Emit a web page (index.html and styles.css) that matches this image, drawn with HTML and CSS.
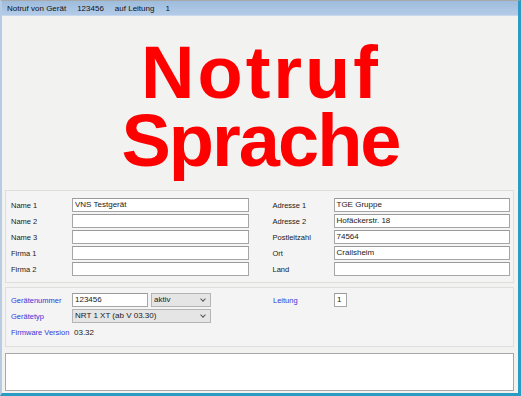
FILE: index.html
```html
<!DOCTYPE html>
<html lang="de">
<head>
    <meta charset="UTF-8">
    <title>Notruf</title>
    <link rel="stylesheet" href="styles.css">
</head>
<body>
    <div class="window">
        <div class="titlebar">
            <span>Notruf von Gerät</span>
            <span>123456</span>
            <span>auf Leitung</span>
            <span>1</span>
        </div>

        <div class="content">
            <div class="hero">
                <div class="hero-line wide">Notruf</div>
                <div class="hero-line narrow">Sprache</div>
            </div>

            <div class="group address">
                <div class="form-col">
                    <label>Name 1</label><div class="field">VNS Testgerät</div>
                    <label>Name 2</label><div class="field"></div>
                    <label>Name 3</label><div class="field"></div>
                    <label>Firma 1</label><div class="field"></div>
                    <label>Firma 2</label><div class="field"></div>
                </div>
                <div class="form-col">
                    <label>Adresse 1</label><div class="field">TGE Gruppe</div>
                    <label>Adresse 2</label><div class="field">Hofäckerstr. 18</div>
                    <label>Postleitzahl</label><div class="field">74564</div>
                    <label>Ort</label><div class="field">Crailsheim</div>
                    <label>Land</label><div class="field"></div>
                </div>
            </div>

            <div class="group device">
                <div class="device-col">
                    <label class="blue">Gerätenummer</label>
                    <div class="inline">
                        <div class="field num">123456</div>
                        <div class="select short">aktiv<span class="caret"></span></div>
                    </div>
                    <label class="blue">Gerätetyp</label>
                    <div class="select long">NRT 1 XT (ab V 03.30)<span class="caret"></span></div>
                    <label class="blue">Firmware Version</label>
                    <div class="value">03.32</div>
                </div>
                <div class="device-col right">
                    <label class="blue">Leitung</label>
                    <div class="field tiny">1</div>
                </div>
            </div>

            <div class="memo"></div>
        </div>
    </div>
</body>
</html>
```

FILE: styles.css
```css
* {
    margin: 0;
    padding: 0;
    box-sizing: border-box;
}

body {
    font-family: "Liberation Sans", Arial, sans-serif;
    font-size: 8px;
    color: #1a1a1a;
    background: #fff;
    width: 521px;
    height: 396px;
    overflow: hidden;
}

.window {
    width: 521px;
    height: 396px;
    display: flex;
    flex-direction: column;
    border-top: 1px solid #a8a8a8;
    border-left: 2px solid #b7cbe2;
    border-right: 3px solid #2a9cc4;
    border-bottom: 3px solid #2a9cc4;
    background: #f2f2f1;
}

.titlebar {
    height: 15px;
    display: flex;
    align-items: center;
    gap: 11px;
    padding-left: 5px;
    background: linear-gradient(to bottom, #9ebcdc, #b3cbe8);
    border-bottom: 1px solid #c9d9ec;
    color: #111;
}

.content {
    flex: 1;
    display: flex;
    flex-direction: column;
    padding: 0 4px 2px 3px;
}

.hero {
    height: 174px;
    display: flex;
    flex-direction: column;
    justify-content: center;
    align-items: center;
    color: #ff0000;
    font-weight: bold;
    font-size: 74px;
    line-height: 68px;
    padding-top: 8px;
}

.hero-line.wide {
    letter-spacing: 3px;
    margin-right: -3px;
}

.hero-line.narrow {
    letter-spacing: -2px;
    margin-right: -2px;
}

.group {
    border: 1px solid #dedede;
    background: #f4f4f4;
    display: flex;
}

.group label {
    font-size: 7.5px;
    white-space: nowrap;
}

.address {
    height: 93px;
    padding: 7px 3px 0 5px;
    gap: 24px;
}

.form-col {
    flex: 1;
    display: grid;
    grid-template-columns: 61px 1fr;
    grid-auto-rows: 14px;
    row-gap: 2px;
    align-items: center;
}

.field {
    height: 14px;
    border: 1px solid #a6a6a6;
    border-top-color: #9a9a9a;
    background: #fff;
    padding: 0 2px;
    line-height: 12px;
    white-space: nowrap;
}

.device {
    margin-top: 4px;
    height: 60px;
    padding: 5px 4px 0 5px;
    gap: 62px;
}

.device-col {
    display: grid;
    grid-template-columns: 61px auto;
    grid-auto-rows: 14px;
    row-gap: 2px;
    align-items: center;
    width: 200px;
    white-space: nowrap;
}

.device-col.right {
    grid-template-columns: 61px auto;
    width: auto;
}

.blue {
    color: #3636d6;
}

.inline {
    display: flex;
    gap: 3px;
}

.num {
    width: 76px;
}

.tiny {
    width: 13px;
    padding: 0 2px;
}

.select {
    position: relative;
    height: 14px;
    border: 1px solid #b4b4b4;
    background: #e5e5e5;
    padding: 0 2px;
    line-height: 12px;
}

.short {
    width: 60px;
}

.long {
    width: 139px;
}

.caret {
    position: absolute;
    right: 5px;
    top: 3px;
    width: 4px;
    height: 4px;
    border-right: 1px solid #555;
    border-bottom: 1px solid #555;
    transform: rotate(45deg);
}

.value {
    padding-left: 2px;
}

.memo {
    margin-top: 6px;
    height: 38px;
    border: 1px solid #a8a8a8;
    background: #fff;
}
```
